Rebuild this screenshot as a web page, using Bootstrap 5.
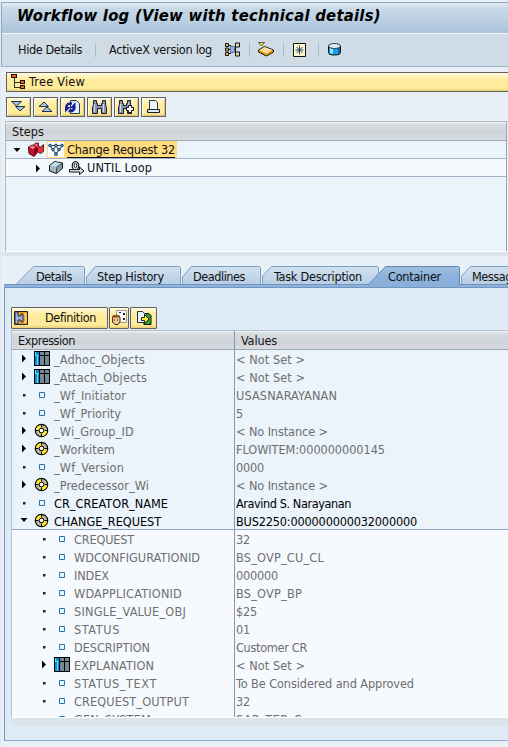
<!DOCTYPE html>
<html lang="en">
<head>
<meta charset="utf-8">
<meta name="viewport" content="width=device-width, initial-scale=1">
<title>Workflow log</title>
<link href="https://cdn.jsdelivr.net/npm/bootstrap@5.3.0/dist/css/bootstrap.min.css" rel="stylesheet">
<style>
body{font:12.6px/18px "DejaVu Sans Condensed","DejaVu Sans",sans-serif;font-stretch:condensed;background:#e8eff7;color:#111;width:508px;height:747px;overflow:hidden;border-left:1px solid #e3e9f0}
svg{display:block;flex:none}
[data-w]{white-space:nowrap;display:inline-block;flex:none}
.win-top{margin:2px 0 0;border:1px solid #8fa9c1;border-right:0;border-bottom-color:#9bb4c9;height:65px;background:#cfdce6}
.title-bar{height:31px;background:linear-gradient(#e2ecf4 0,#c8d9e7 5px,#bdd1e2 16px,#adc5dc 28px);border-bottom:1px solid #eaf3f9;padding-left:15px;font-size:16.5px;line-height:26px;color:#000}
.tool-bar{height:32px;padding-left:16px}
.tool-bar .sep{width:1px;height:14px;background:#a2bbd5;flex:none}
.yellow{background:linear-gradient(#fffceb 0,#fff6c8 2px,#ffeb9c 7px,#ffeb9c 85%,#e8cc75);border:1px solid #62615a}
.tree-bar{margin:5px 0 0 5px;height:20px;border-right:0;padding-left:4px}
.btns{margin:5px 0 0 5px;gap:2px}
.sq{width:25px;height:20px;box-shadow:inset 1px 1px #fffbe5,inset -1px -1px #dfc577}
.head-row{background:linear-gradient(#f5f7f7 0,#d8dde0 2px,#ced3da 11px,#d9dddf);border-bottom:1px solid #98a7b5;color:#151515}
.steps{margin:4px 0 0 4px;border:1px solid #adbac6;border-right:0;height:131px;border-bottom:1px solid #fff;background:#ebf3fb}
.steps-in{width:501px;border-right:1px solid #94a6b8;height:100%}
.steps .head-row{height:19px;padding-left:6px;line-height:19px}
.srow{height:18px;border-bottom:1px solid #9fb4c9}
.sel{background:#ffdb7d;height:17px}
.sel span{line-height:18px;height:17px;border-bottom:1px solid #111}
.splitter{height:4px;background:#dae4ea}
.tabstrip{height:28px;margin-top:10px}
.tabstrip>svg{position:absolute;left:0;top:0;z-index:0}
.tabstrip>div{position:relative;z-index:1;padding-left:35px}
.pane{margin-left:3px;height:457px;margin-top:-10px;border:1px solid #7599c2;border-right:0;border-bottom-color:#8fb0d2;background:#deeaf4;padding:22px 0 0 6px}
.pane .yellow{height:22px;border-radius:1px}
.pane .yellow [data-w]{line-height:20px}
.grid{height:388px;margin-top:1px;border:1px solid #b3bfca;border-right:0;border-bottom:1px solid #fff;background:#f6faff;overflow:hidden}
.grid .head-row{height:19px;line-height:19px}
.c1{width:223px;border-right:1px solid #8698a9;flex:none}
.c2{padding-left:1px}
.grow{height:18px;color:#6f6f6f;line-height:20px}
.top-level{background:#ebf3fb}
.last-top{border-bottom:1px solid #91a6bb}
.strong{color:#000}
.foot{height:8px;background:#dae5ea}
.mk{width:12px;flex:none}.ic{width:16px;flex:none}
</style>
<script src="https://cdn.jsdelivr.net/npm/bootstrap@5.3.0/dist/js/bootstrap.bundle.min.js"></script>
</head>
<body>
<svg width="0" height="0" class="position-absolute">
<symbol id="right" viewBox="0 0 12 16"><path d="M4 4.500l4 4-4 4z" fill="#000"/></symbol>
<symbol id="down" viewBox="0 0 12 16"><path d="M2.500 6h7l-3.500 4z" fill="#000"/></symbol>
<symbol id="dot" viewBox="0 0 12 16"><path d="M5 8h2.500v2.500H5z" fill="#222"/></symbol>
<symbol id="box" viewBox="0 0 16 16"><path d="M5.500 6.500h5v5h-5z" fill="#eaf7ff" stroke="#2873b0"/></symbol>
<symbol id="tab" viewBox="0 0 16 16"><path d="M0 1h16v15H0z" fill="#000"/><path d="M1 2h4v3H1zM1 6h4v9H1z" fill="#168bd8"/><path d="M1 2h1v3H1zM3 6h1v9H3zM1 5h4v1H1z" fill="#31ecff"/><path d="M6 2h4v3H6zM11 2h4v3h-4zM6 6h4v9H6zM11 6h4v9h-4z" fill="#718895"/></symbol>
<symbol id="ring" viewBox="0 0 16 16"><circle cx="7.500" cy="8.500" r="4.300" fill="none" stroke="#000" stroke-width="5"/><circle cx="7.500" cy="8.500" r="4.200" fill="none" stroke="#c3bd9a" stroke-width="2.800"/><path d="M7.500 4.300A4.200 4.200 0 0 0 3.300 8.500M7.500 12.700A4.200 4.200 0 0 0 11.700 8.500" fill="none" stroke="#ffe62b" stroke-width="2.800"/><path d="M7.500 2.500v3M7.500 11.500v3M1.500 8.500h3M10.500 8.500h3" stroke="#000"/><circle cx="7.500" cy="8.500" r="1.700" fill="#fff"/></symbol>
</svg>

<header class="win-top">
  <div class="title-bar fw-bold fst-italic"><span data-w="364">Workflow log (View with technical details)</span></div>
  <div class="tool-bar d-flex align-items-center">
    <span data-w="64">Hide Details</span><i class="sep" style="margin-left:13px"></i>
    <span data-w="103" style="margin-left:13px">ActiveX version log</span>
    <svg width="17" height="16" style="margin-left:12px"><path d="M4 3.500h3M4 7.500h3M4 11.500h3M10 7.500h2M11.500 3v9" stroke="#111"/><path d="M1.500 1.500h3v3h-3zM1.500 6h3v3h-3zM1.500 10.500h3v3h-3z" fill="#f5c257" stroke="#111"/><path d="M6.500 4.500h4v6h-4z" fill="#9aaede" stroke="#5870a0"/><path d="M11.500 1h4v4h-4zM11.500 10h4v4h-4z" fill="#d8deb0" stroke="#111"/></svg>
    <i class="sep" style="margin-left:8px"></i>
    <svg width="17" height="16" style="margin-left:8px"><path d="M.5 8l6-3.500 9 3.500v2l-7 4-8-4z" fill="#f29a08" stroke="#111"/><path d="M1.500 8l5-3 8 3-6 3.500z" fill="#ffe2a6"/><path d="M.5.500h6L3.500 4z" fill="#ffeb24" stroke="#333" stroke-width=".8"/></svg>
    <i class="sep" style="margin-left:8px"></i>
    <svg width="14" height="16" style="margin-left:9px"><path d="M.5 1.500h12v13H.5z" fill="#fff6cc" stroke="#111"/><path d="M6.500 3.500v9M2.500 8h8M3.500 5l6 6M9.500 5l-6 6" stroke="#24456b"/></svg>
    <i class="sep" style="margin-left:11px"></i>
    <svg width="14" height="16" style="margin-left:9px"><path d="M.5 4v6.500q0 2.500 6 2.500t6-2.500V4" fill="#1f9bea" stroke="#111"/><path d="M2 5h3v7l-3-1z" fill="#80f0ff"/><path d="M10 6h2v5l-2 1z" fill="#185ca0"/><ellipse cx="6.500" cy="4" rx="6" ry="2.500" fill="#d5eefa" stroke="#333"/></svg>
  </div>
</header>

<div class="tree-bar yellow d-flex align-items-center">
  <svg width="15" height="18" shape-rendering="crispEdges"><path d="M3.500 5v10M4 9.500h5M4 14.500h5" fill="none" stroke="#333"/><path d="M.5 1.500h5v3h-5z" fill="#f5630a" stroke="#111"/><path d="M9.500 7.500h4v3h-4zM9.500 12.500h4v3h-4z" fill="#ef6d13" stroke="#111"/></svg>
  <span data-w="56" style="margin-left:3px">Tree View</span>
</div>
<div class="btns d-flex">
  <span class="sq yellow d-flex align-items-center justify-content-center"><svg width="17" height="16"><path d="M1.500 2.500h10l-5 4.500zM5.500 7.500h9.500L10 12z" fill="#acc5df" stroke="#1d3253"/></svg></span>
  <span class="sq yellow d-flex align-items-center justify-content-center"><svg width="17" height="16"><path d="M2 7.500h9.500L7 3zM5 12.500h10L10 8z" fill="#acc5df" stroke="#1d3253"/></svg></span>
  <span class="sq yellow d-flex align-items-center justify-content-center"><svg width="17" height="16"><path d="M6.500 1.500h6l3 3v10h-9z" fill="#e6f2fa" stroke="#27394e"/><path d="M2.300 8.500Q2.500 4 8 4.500M10.500 8Q10 12.500 4.500 12" fill="none" stroke="#1421a2" stroke-width="2.600"/><path d="M11.500 3v6H6zM1 13.500V8h5.500z" fill="#1421a2"/></svg></span>
  <span class="sq yellow d-flex align-items-center justify-content-center"><svg width="17" height="16"><path d="M2.500 1.500h3v3h1v2h4v-2h1v-3h3v4l1 3v6h-5v-5h-4v5h-5v-6l1-3z" fill="#8892b5" stroke="#171d35"/><path d="M3.500 5v8M12.500 5v8" stroke="#d8def0"/></svg></span>
  <span class="sq yellow d-flex align-items-center justify-content-center"><svg width="17" height="16"><path d="M1.500 1.500h3v3h1v2h3v-2h1v-3h3v4l1 3v6h-4v-5h-4v5h-5v-6l1-3z" fill="#8892b5" stroke="#171d35"/><path d="M2.500 5v8M10.500 4v4" stroke="#d8def0"/><path d="M10.500 6.500h3v2h2v3h-2v2h-3v-2h-2v-3h2z" fill="#fff" stroke="#111"/></svg></span>
  <span class="sq yellow d-flex align-items-center justify-content-center"><svg width="17" height="16"><path d="M4.500 10.500v-9h6l2 2v7" fill="#edf6fb" stroke="#26374a"/><path d="M2.500 10.500h12v3h-12z" fill="#c9dae5" stroke="#15202b"/><path d="M4 12h9" stroke="#fff"/></svg></span>
</div>

<section class="steps"><div class="steps-in">
  <div class="head-row"><span data-w="32">Steps</span></div>
  <div class="srow d-flex align-items-center" style="padding-left:5px">
    <svg width="12" height="16"><use href="#down"/></svg>
    <svg width="17" height="16" style="margin-left:5px"><path d="M.5 5l4-2 4.500 2v6l-3 3.500-5-3z" fill="#c5112b" stroke="#4b000c"/><path d="M1 5l4 2 3.500-2-4-1.500z" fill="#ff8288"/><path d="M6 7v7l3-3V5z" fill="#8c001d"/><path d="M5.500 3.500l2-2.500h3v3.500l2 .5 3-2.500v7l-3 2-3-1.500V6z" fill="#e2333f" stroke="#4b000c" stroke-width=".8"/><path d="M7 3l2-1.500v3z" fill="#ff9a9a"/></svg>
    <div class="sel d-flex align-items-center" style="margin-left:2px;width:130px;padding-left:1px">
      <svg width="16" height="16"><path d="M0 0h16v15H0z" fill="#fff"/><path d="M2 3.500h12M2.500 4L5 8l3-4 3 4 3-4M5 8l3 3.500L11 8" fill="none" stroke="#111" stroke-width=".8"/><g fill="#4ba3e4" stroke="#102c4d" stroke-width=".8"><circle cx="2" cy="3.500" r="1.400"/><circle cx="8" cy="3.500" r="1.400"/><circle cx="14" cy="3.500" r="1.400"/><circle cx="5" cy="7.500" r="1.400"/><circle cx="11" cy="7.500" r="1.400"/><circle cx="8" cy="12" r="1.600"/></g></svg>
      <span data-w="108" style="margin-left:3px">Change Request 32</span>
    </div>
  </div>
  <div class="srow d-flex align-items-center" style="padding-left:26px;background:#f6faff">
    <svg width="12" height="16"><use href="#right"/></svg>
    <svg width="15" height="16" style="margin-left:5px"><path d="M.5 5.500l5-4 8 1.500v5.500l-6 5-7-2.500z" fill="#a9b8c0" stroke="#111"/><path d="M1.500 5.500l4.500-3.500 6.500 1.500-5 3.500z" fill="#bfe3f5"/><path d="M7.500 7.500v5.500l5.500-4.500V4z" fill="#8198a5"/><path d="M7.500 7.500V13M7.500 7L13 3.500" stroke="#222" stroke-width=".7"/></svg>
    <svg width="18" height="16" style="margin-left:4px"><path d="M5.500 9.500Q3.500 6.500 4.500 4T7.500 1.500 10.500 4 9.500 9.500" fill="#eee" stroke="#111" stroke-width="1.200"/><ellipse cx="7.500" cy="5.500" rx="1.300" ry="2.300" fill="#fff" stroke="#111" stroke-width=".9"/><path d="M1.500 9.500h10v-2.500l4.500 4-4.500 3.500v-2.500h-10z" fill="#d5dadd" stroke="#111"/></svg>
    <span data-w="65" style="margin-left:1px;line-height:19px">UNTIL Loop</span>
  </div>
</div></section>
<div class="splitter"></div>

<nav class="tabstrip position-relative">
  <svg width="507" height="28" viewBox="1 266 507 28">
    <defs><linearGradient id="tg" x2="0" y2="1"><stop stop-color="#d2e1ee"/><stop offset="1" stop-color="#b7cee5"/></linearGradient><linearGradient id="ta" x2="0" y2="1"><stop stop-color="#9fc0de"/><stop offset=".6" stop-color="#8aafda"/></linearGradient></defs>
    <g fill="url(#tg)" stroke="#7c9fc4">
    <path d="M16 284.500L33.500 266.500H83.500l1 1V284.500z"/><path d="M86.500 284.500V277L95.500 266.500H179.500l1 1V284.500z"/><path d="M182.500 284.500V277L191.500 266.500H259.500l1 1V284.500z"/><path d="M262.500 284.500V276L271.500 266.500H377.500l1 1V284.500z"/><path d="M461.500 284.500V276L470.500 266.500H515V284.500z"/></g>
    <path d="M4 284h504v4H4z" fill="#8fb3da"/><path d="M4 284.500h504M4 287.500h504" stroke="#6f94c0"/>
    <path d="M368 285L385.500 266.500H458.500l1 1V285z" fill="url(#ta)" stroke="#5f87b8"/><path d="M369 284h90v3h-90z" fill="#8aafda"/>
  </svg>
  <div class="d-flex" style="padding-top:2px">
    <span data-w="36">Details</span><span data-w="67" style="margin-left:25px">Step History</span><span data-w="52" style="margin-left:29px">Deadlines</span><span data-w="88" style="margin-left:29px">Task Description</span><span data-w="53" style="margin-left:26px">Container</span><span style="margin-left:31px" data-w="52">Messages</span>
  </div>
</nav>

<main class="pane">
  <div class="d-flex">
    <span class="yellow d-flex align-items-center" style="width:97px;padding-left:2px"><svg width="14" height="14"><path d="M.5.500h13v13H.5z" fill="#f49b18" stroke="#222"/><path d="M1 1h3v4h3V3h2v8H7V9H4v4H1z" fill="#a5b7df" stroke="#1c2c5a"/><path d="M10 3h2v8h-2" fill="none" stroke="#fff0a1"/></svg><span data-w="51" style="margin-left:17px">Definition</span></span>
    <span class="yellow d-flex align-items-center" style="width:20px;margin-left:1px;padding-left:1px"><svg width="16" height="16"><path d="M5.500.500h10v12h-10z" fill="#fff" stroke="#999"/><path d="M12 3h2v2h-2zM12 8h2v2h-2zM8 2h2v1H8z" fill="#222"/><path d="M1.500 7l1-1.500h5L9 7v5l-2 2.500H4L1.500 12z" fill="#f6c68a" stroke="#422"/><path d="M1 9V6.500L3 5h5l1 2v2L8 7.500H3z" fill="#8b551f"/><path d="M3 10h1M6 10h1" stroke="#311"/></svg></span>
    <span class="yellow d-flex align-items-center justify-content-center" style="width:27px;margin-left:1px"><svg width="16" height="16"><path d="M6 3.500h7l2 2v9H8z" fill="#2e9b32" stroke="#111"/><path d="M1.500 1.500h5l2 2v9h-7z" fill="#e8f2f9" stroke="#20344a"/><path d="M5.500 7.500h3v-3l4.500 4.500-4.500 4.500v-3h-3z" fill="#ffed32" stroke="#222"/></svg></span>
  </div>
  <section class="grid">
    <div class="head-row d-flex"><div class="c1" style="padding-left:6px"><span data-w="57">Expression</span></div><div style="padding-left:6px"><span data-w="36">Values</span></div></div>
    <div id="rows"></div>
  </section>
  <div class="foot"></div>
</main>

<script>
// level, marker, icon, name, name width, value, value width, emphasised
const rows = [
[0,'right','tab','_Adhoc_Objects',91,'< Not Set >',69],
[0,'right','tab','_Attach_Objects',93,'< Not Set >',69],
[0,'dot','box','_Wf_Initiator',72,'USASNARAYANAN',101],
[0,'dot','box','_Wf_Priority',67,'5',7],
[0,'right','ring','_Wi_Group_ID',80,'< No Instance >',92],
[0,'right','ring','_Workitem',61,'FLOWITEM:000000000145',149],
[0,'dot','box','_Wf_Version',70,'0000',28],
[0,'right','ring','_Predecessor_Wi',95,'< No Instance >',92],
[0,'dot','box','CR_CREATOR_NAME',114,'Aravind S. Narayanan',115,1],
[0,'down','ring','CHANGE_REQUEST',107,'BUS2250:000000000032000000',181,1],
[1,'dot','box','CREQUEST',60,'32',14],
[1,'dot','box','WDCONFIGURATIONID',126,'BS_OVP_CU_CL',88],
[1,'dot','box','INDEX',35,'000000',42],
[1,'dot','box','WDAPPLICATIONID',108,'BS_OVP_BP',66],
[1,'dot','box','SINGLE_VALUE_OBJ',112,'$25',21],
[1,'dot','box','STATUS',46,'01',14],
[1,'dot','box','DESCRIPTION',76,'Customer CR',71],
[1,'right','tab','EXPLANATION',80,'< Not Set >',69],
[1,'dot','box','STATUS_TEXT',83,'To Be Considered and Approved',178],
[1,'dot','box','CREQUEST_OUTPUT',115,'32',14],
[1,'dot','box','GEN_SYSTEM',77,'SAP_TEP_C',66]];
document.getElementById('rows').innerHTML = rows.map((r, i) =>
 `<div class="grow d-flex ${r[0] ? '' : 'top-level'} ${i === 9 ? 'last-top' : ''} ${r[7] ? 'strong' : ''}">
 <div class="c1 d-flex" style="padding-left:${6 + r[0] * 20}px"><svg class="mk" height="16"><use href="#${r[1]}"/></svg><svg class="ic" height="16" style="margin-left:4px"><use href="#${r[2]}"/></svg><span style="margin-left:4px" data-w="${r[4]}">${r[3]}</span></div>
 <div class="c2"><span data-w="${r[6]}">${r[5].replace('<', '&lt;')}</span></div></div>`).join('');
// Track each label to its intended width
document.querySelectorAll('[data-w]').forEach(e => {
  const w = +e.dataset.w, n = e.textContent.length;
  e.style.letterSpacing = ((w - e.getBoundingClientRect().width) / n).toFixed(3) + 'px';
});
</script>
</body>
</html>
